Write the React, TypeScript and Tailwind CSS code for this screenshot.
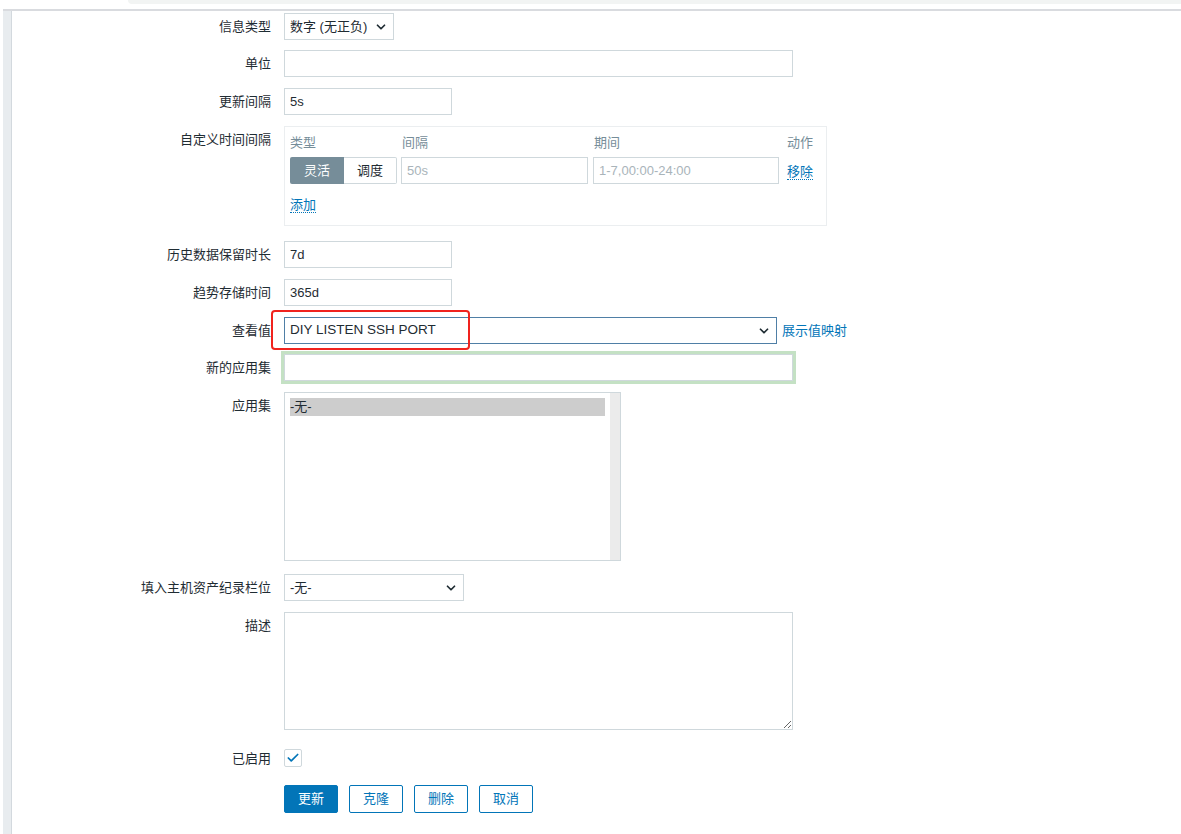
import { ChevronDown, Check } from "lucide-react";

// ─── Shared ───────────────────────────────────────────────────────────────────

const FONT = { fontFamily: '"Liberation Sans", Arial, "Noto Sans CJK SC", sans-serif' };

function Label({ text, center }: { text: string; center?: boolean }) {
    return (
        <div className={`w-[272px] shrink-0 pr-[1px] text-right text-[13px] text-[#1f2c33] ${center ? "self-center" : "leading-[27px]"}`}>
            {text}
        </div>
    );
}

function Row({ label, mt, center, children }: { label: string; mt: string; center?: boolean; children: React.ReactNode }) {
    return (
        <div className={`flex ${mt}`}>
            <Label text={label} center={center} />
            <div className="ml-[12px] relative">{children}</div>
        </div>
    );
}

function TextBox({ w, value, placeholder }: { w: string; value?: string; placeholder?: string }) {
    return (
        <div className={`${w} h-[27px] border border-[#cfd8dc] bg-white flex items-center px-[5px] text-[13px] ${value ? "text-[#1f2c33]" : "text-[#a9b4ba]"}`}>
            {value ?? placeholder ?? ""}
        </div>
    );
}

function SelectBox({ w, value, border = "border-[#cfd8dc]", big }: { w: string; value: string; border?: string; big?: boolean }) {
    return (
        <div className={`${w} h-[27px] border ${border} bg-white flex items-center justify-between pl-[5px] pr-[5px] ${big ? "text-[13.5px]" : "text-[13px]"} text-[#1f2c33]`}>
            <span>{value}</span>
            <ChevronDown className="w-[14px] h-[14px] text-[#1f2c33]" strokeWidth={3} />
        </div>
    );
}

function DotLink({ text }: { text: string }) {
    return <span className="text-[13px] text-[#0275b8] border-b border-dotted border-[#0275b8] leading-[15px]">{text}</span>;
}

function Btn({ text, primary }: { text: string; primary?: boolean }) {
    return (
        <button type="button"
            className={`h-[28px] w-[54px] rounded-[2px] border text-[13px] ${primary ? "bg-[#0275b8] border-[#0275b8] text-white" : "bg-white border-[#0275b8] text-[#0275b8]"}`}>
            {text}
        </button>
    );
}

// ─── Page ─────────────────────────────────────────────────────────────────────

export default function App() {
    return (
        <div className="w-[1181px] h-[834px] bg-white overflow-hidden" style={FONT}>
            {/* top strip */}
            <div className="h-[4px] ml-[128px] bg-[#f2f4f3] rounded-bl-[6px]" />
            <div className="h-[5px]" />
            <div className="h-[2px] ml-[3px] bg-[#d9dbdf]" />

            <div className="flex">
                {/* left rail */}
                <div className="w-[9px] ml-[3px] h-[823px] bg-[#e8ecef] border-r border-[#d3d9de]" />

                {/* form */}
                <div className="flex-1 -ml-[12px]">
                    <Row label="信息类型" mt="mt-[2px]">
                        <SelectBox w="w-[110px]" value="数字 (无正负)" />
                    </Row>

                    <Row label="单位" mt="mt-[10px]">
                        <TextBox w="w-[509px]" />
                    </Row>

                    <Row label="更新间隔" mt="mt-[11px]">
                        <TextBox w="w-[168px]" value="5s" />
                    </Row>

                    <Row label="自定义时间间隔" mt="mt-[11px]">
                        <div className="w-[543px] h-[100px] border border-[#ebeef0] px-[5px]">
                            <div className="flex text-[13px] text-[#768d99] h-[30px] items-center pt-[2px]">
                                <span className="w-[112px]">类型</span>
                                <span className="w-[192px]">间隔</span>
                                <span className="w-[193px]">期间</span>
                                <span>动作</span>
                            </div>
                            <div className="flex items-center">
                                <div className="flex h-[27px] w-[107px] text-[13px]">
                                    <div className="w-[54px] bg-[#768d99] text-white flex items-center justify-center rounded-l-[2px]">灵活</div>
                                    <div className="w-[53px] border border-[#cfd8dc] border-l-0 text-[#1f2c33] flex items-center justify-center rounded-r-[2px]">调度</div>
                                </div>
                                <div className="ml-[4px]"><TextBox w="w-[187px]" placeholder="50s" /></div>
                                <div className="ml-[5px]"><TextBox w="w-[186px]" placeholder="1-7,00:00-24:00" /></div>
                                <div className="ml-[8px]"><DotLink text="移除" /></div>
                            </div>
                            <div className="mt-[8px]"><DotLink text="添加" /></div>
                        </div>
                    </Row>

                    <Row label="历史数据保留时长" mt="mt-[15px]">
                        <TextBox w="w-[168px]" value="7d" />
                    </Row>

                    <Row label="趋势存储时间" mt="mt-[11px]">
                        <TextBox w="w-[168px]" value="365d" />
                    </Row>

                    <Row label="查看值" mt="mt-[11px]">
                        <div className="flex items-center">
                            <SelectBox w="w-[493px]" value="DIY LISTEN SSH PORT" border="border-[#4f7fa6]" big />
                            <span className="ml-[5px] text-[13px] text-[#0275b8]">展示值映射</span>
                        </div>
                        {/* highlight box */}
                        <div className="absolute -left-[13px] -top-[7px] w-[199px] h-[40px] border-[2.5px] border-[#f0231e] rounded-[4px] pointer-events-none" />
                    </Row>

                    <Row label="新的应用集" mt="mt-[10px]">
                        <div className="w-[509px] h-[27px] border border-[#cfd8dc] bg-white shadow-[0_0_0_3px_#c4e1c4]" />
                    </Row>

                    <Row label="应用集" mt="mt-[11px]">
                        <div className="w-[337px] h-[169px] border border-[#cfd8dc] bg-white flex">
                            <div className="flex-1 pl-[5px] pr-[5px] pt-[5px]">
                                <div className="h-[18px] bg-[#cdcdcd] text-[13px] text-[#1f2c33] leading-[18px]">-无-</div>
                            </div>
                            <div className="w-[10px] bg-[#ebebeb]" />
                        </div>
                    </Row>

                    <Row label="填入主机资产纪录栏位" mt="mt-[13px]">
                        <SelectBox w="w-[180px]" value="-无-" />
                    </Row>

                    <Row label="描述" mt="mt-[11px]">
                        <textarea className="block w-[509px] h-[118px] border border-[#cfd8dc] bg-white outline-none resize" />
                    </Row>

                    <Row label="已启用" mt="mt-[19px]" center>
                        <div className="w-[18px] h-[18px] border border-[#cfd8dc] rounded-[2px] flex items-center justify-center">
                            <Check className="w-[14px] h-[14px] text-[#0275b8]" strokeWidth={3} />
                        </div>
                    </Row>

                    <div className="flex mt-[16px] ml-[284px] gap-[11px]">
                        <Btn text="更新" primary />
                        <Btn text="克隆" />
                        <Btn text="删除" />
                        <Btn text="取消" />
                    </div>
                </div>
            </div>
        </div>
    );
}
